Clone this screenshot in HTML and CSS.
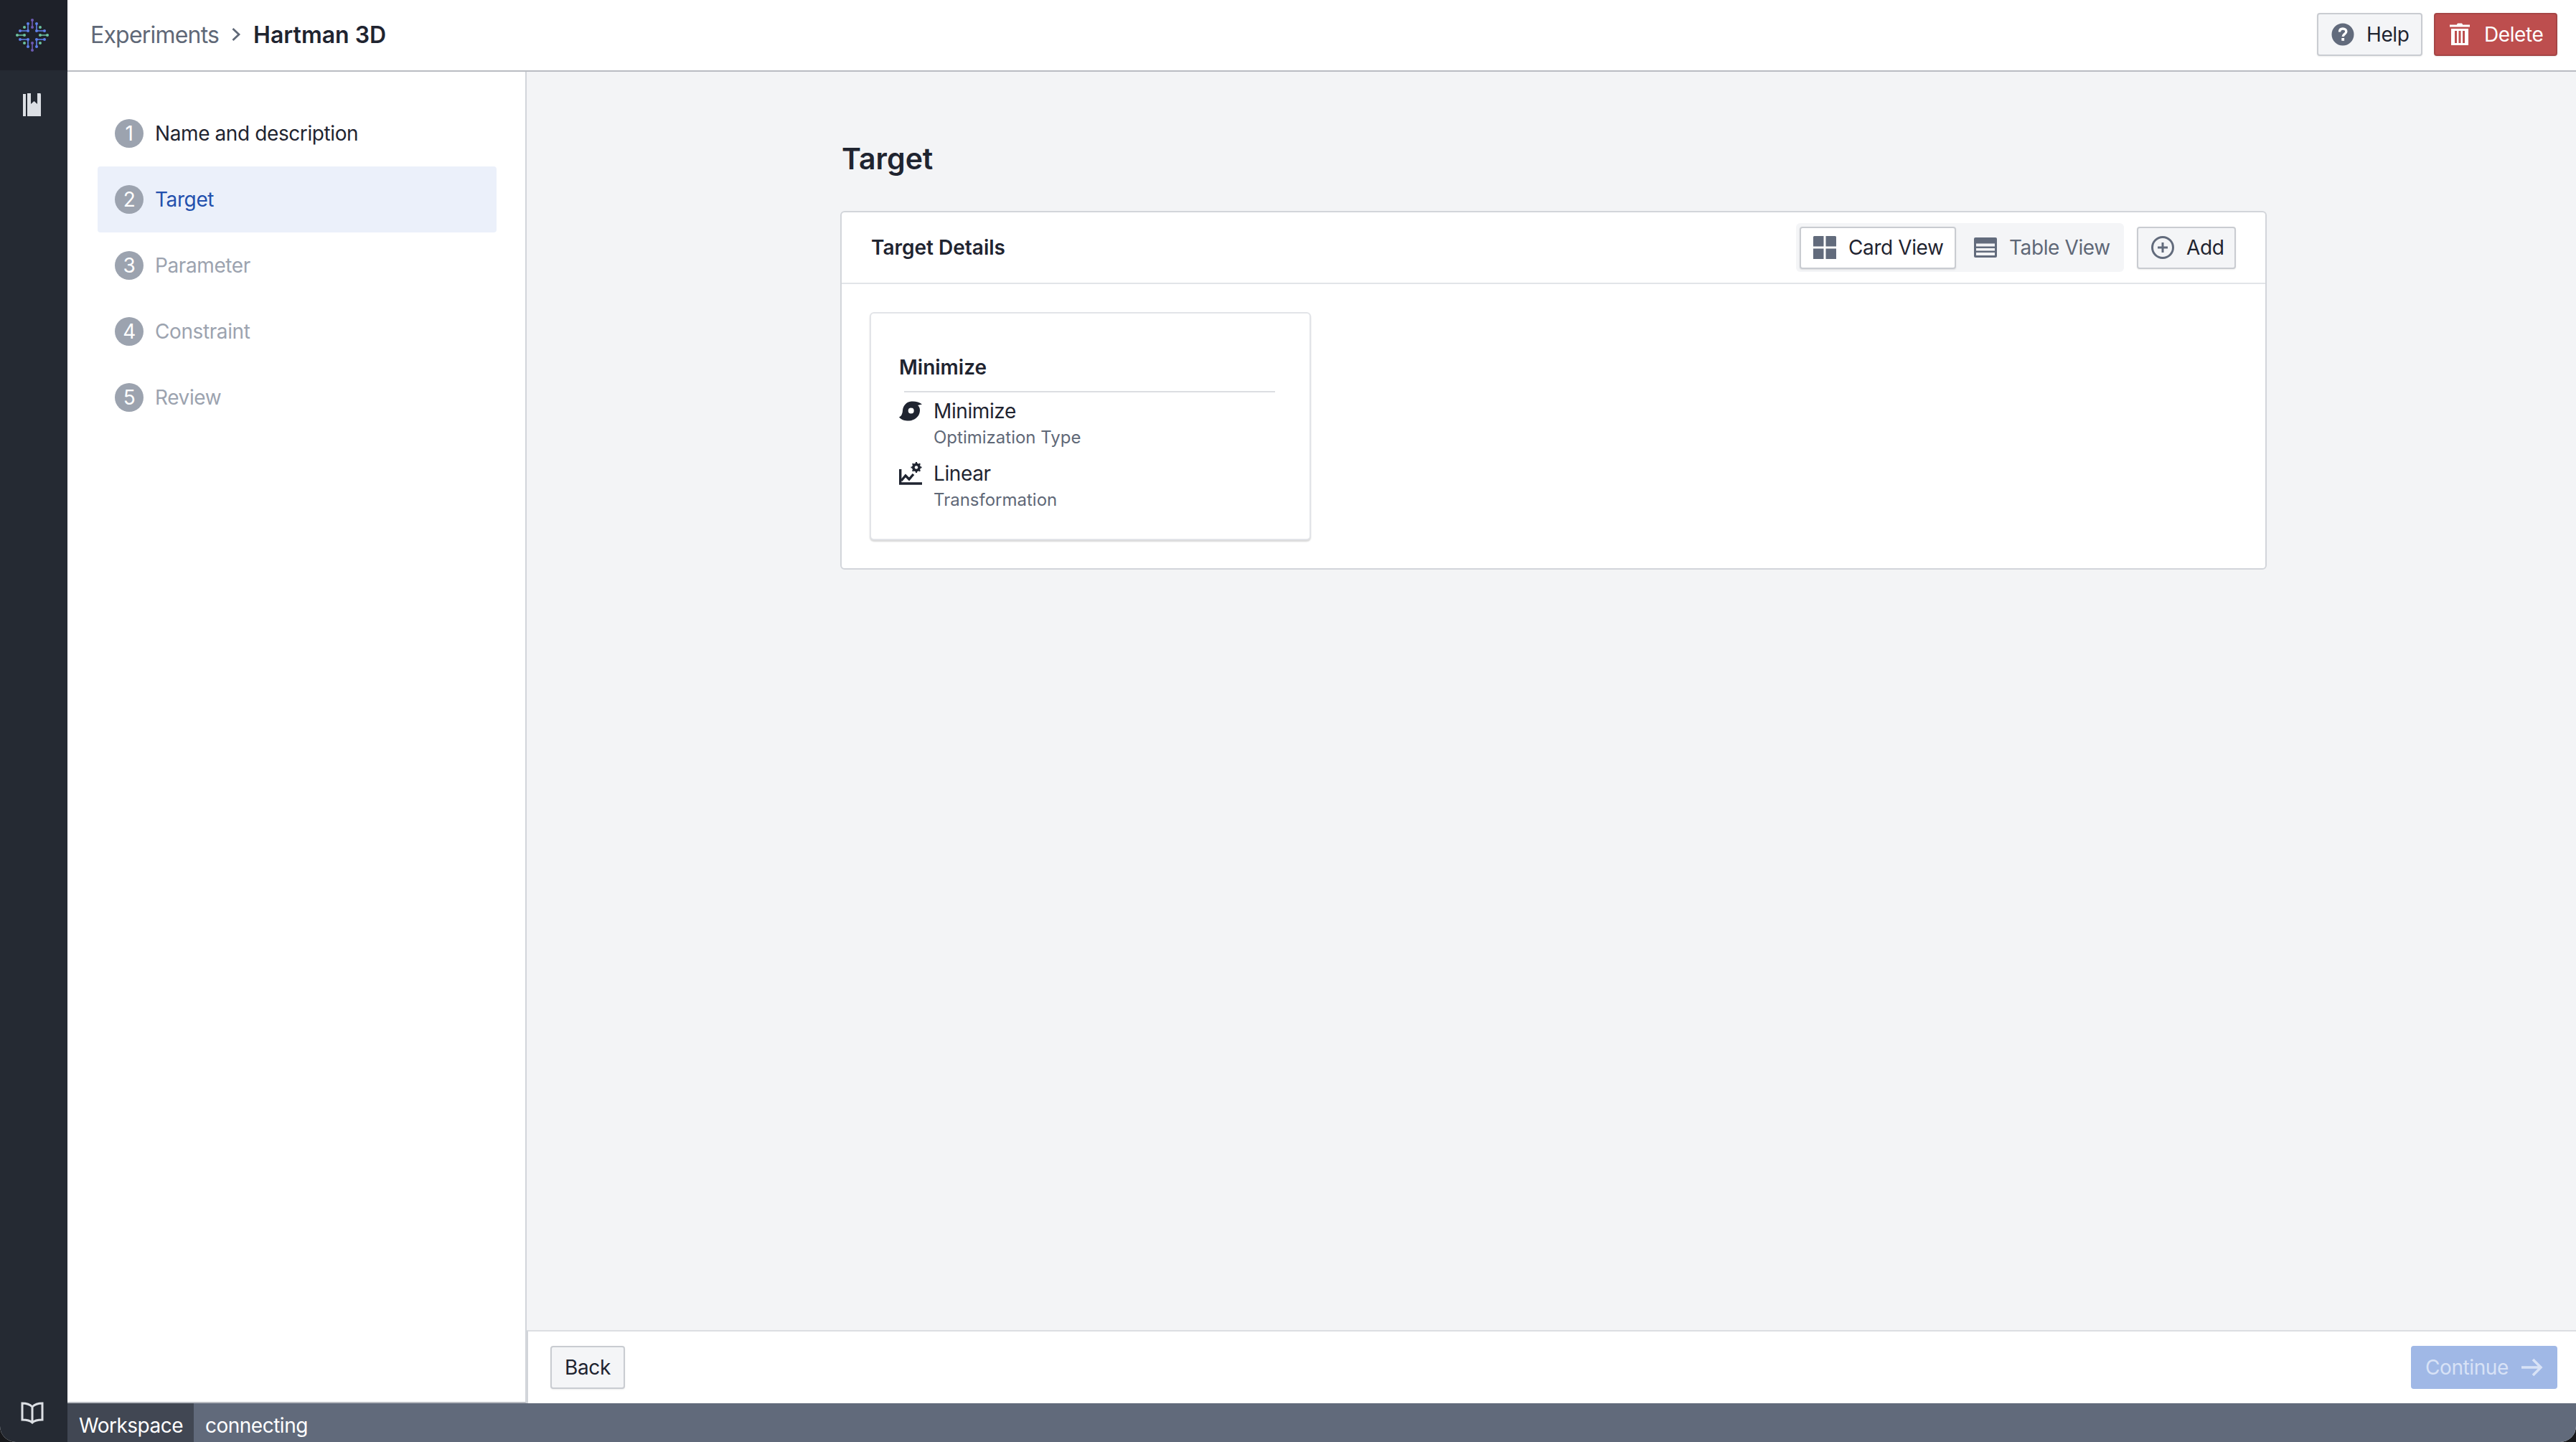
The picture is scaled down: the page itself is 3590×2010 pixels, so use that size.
FILE: index.html
```html
<!DOCTYPE html>
<html lang="en">
<head>
<meta charset="utf-8">
<title>Hartman 3D</title>
<link rel="stylesheet" href="styles.css">
</head>
<body>
<div class="app">
  <aside class="rail">
    <div class="rail-logo">
      <svg class="logo" viewBox="0 0 48 48" width="48" height="48">
        <g fill="none" stroke-width="1.6">
          <g stroke="#5f80ea">
            <path d="M18 8V18H6M30 8V18H42M18 40V30H6M30 40V30H42"/>
          </g>
          <g stroke="#6d5bb5"><path d="M24 2V14M24 34V46"/></g>
          <g stroke="#6cc2a0"><path d="M2 24H14M34 24H46"/></g>
        </g>
        <g fill="#5f80ea">
          <circle cx="18" cy="8" r="2"/><circle cx="18" cy="18" r="2"/><circle cx="7" cy="18" r="2"/>
          <circle cx="30" cy="8" r="2"/><circle cx="30" cy="18" r="2"/><circle cx="41" cy="18" r="2"/>
          <circle cx="18" cy="40" r="2"/><circle cx="18" cy="30" r="2"/><circle cx="7" cy="30" r="2"/>
          <circle cx="30" cy="40" r="2"/><circle cx="30" cy="30" r="2"/><circle cx="41" cy="30" r="2"/>
        </g>
        <g fill="#6d5bb5"><circle cx="24" cy="3" r="2"/><circle cx="24" cy="13" r="2"/><circle cx="24" cy="35" r="2"/><circle cx="24" cy="45" r="2"/></g>
        <g fill="#6cc2a0">
          <circle cx="3" cy="24" r="2"/><circle cx="13" cy="24" r="2"/><circle cx="35" cy="24" r="2"/><circle cx="45" cy="24" r="2"/>
          <circle cx="13" cy="13" r="2"/><circle cx="35" cy="13" r="2"/><circle cx="13" cy="35" r="2"/><circle cx="35" cy="35" r="2"/>
        </g>
      </svg>
    </div>
    <div class="rail-main">
      <svg class="rail-icon" viewBox="0 0 26 32" width="26" height="32" fill="#dcdfe4">
        <path d="M0 1H4V32H0Z"/>
        <path d="M6 0H11V15L15.500 11L20 15V0H24.500L25 2V32H6Z"/>
      </svg>
    </div>
    <svg class="rail-book" viewBox="0 0 32 32" width="32" height="32" fill="none" stroke="#dcdfe4" stroke-width="3">
      <path d="M16 8C13 5 8 3 2 3V26C8 26 13 27 16 30C19 27 24 26 30 26V3C24 3 19 5 16 8ZM16 8V30"/>
    </svg>
  </aside>

  <div class="workspace">
    <header class="topbar">
      <nav class="crumbs">
        <span class="crumb">Experiments</span>
        <svg class="crumb-sep" viewBox="0 0 14 20" width="14" height="20" fill="none" stroke="#5f6877" stroke-width="2.800"><path d="M2.500 2L11 10L2.500 18"/></svg>
        <span class="crumb-current">Hartman 3D</span>
      </nav>
      <div class="top-actions">
        <button class="btn btn-help">
          <svg class="btn-icon" viewBox="0 0 32 32" width="32" height="32"><circle cx="16" cy="16" r="15.500" fill="#626b7c"/><path d="M11.500 12.500C11.500 9.500 13.500 8 16 8C18.800 8 20.800 9.700 20.800 12C20.800 15.300 16.200 15.400 16.200 19" fill="none" stroke="#fff" stroke-width="3.400"/><rect x="14.300" y="21" width="3.800" height="3.800" fill="#fff"/></svg>
          Help
        </button>
        <button class="btn btn-danger">
          <svg class="btn-icon" viewBox="0 0 28 32" width="28" height="32" fill="#fff"><path d="M10 2.500C10 1 11 0.500 12 0.500H16C17 0.500 18 1 18 2.500H28V5.500H0V2.500Z"/><path d="M2 8H26V31H2ZM7 11V28H10V11ZM12.500 11V28H15.500V11ZM18 11V28H21V11Z" fill-rule="evenodd"/></svg>
          Delete
        </button>
      </div>
    </header>

    <div class="body-row">
      <nav class="steps">
        <div class="step step-done"><span class="step-num">1</span>Name and description</div>
        <div class="step step-active"><span class="step-num">2</span>Target</div>
        <div class="step"><span class="step-num">3</span>Parameter</div>
        <div class="step"><span class="step-num">4</span>Constraint</div>
        <div class="step"><span class="step-num">5</span>Review</div>
      </nav>

      <main class="main">
        <div class="content">
          <h1 class="page-title">Target</h1>
          <section class="panel">
            <div class="panel-head">
              <h2 class="panel-title">Target Details</h2>
              <div class="panel-tools">
                <div class="segment">
                  <button class="seg seg-on">
                    <svg class="btn-icon" viewBox="0 0 32 32" width="32" height="32" fill="#626b7c"><path d="M0 1.500Q0 0 1.500 0H14.500V14.500H0ZM17.500 0H30.500Q32 0 32 1.500V14.500H17.500ZM0 17.500H14.500V32H0ZM17.500 17.500H32V32H17.500Z"/></svg>
                    Card View
                  </button>
                  <button class="seg seg-off">
                    <svg class="btn-icon" viewBox="0 0 32 28" width="32" height="28"><rect width="32" height="28" rx="2" fill="#626b7c"/><path d="M3 8.500H29V12.500H3ZM3 15H29V18.500H3ZM3 21H29V25H3Z" fill="#f3f4f6"/></svg>
                    Table View
                  </button>
                </div>
                <button class="btn btn-add">
                  <svg class="btn-icon" viewBox="0 0 32 32" width="32" height="32" fill="none" stroke="#626b7c" stroke-width="3"><circle cx="16" cy="16" r="14.500"/><path d="M16 9V23M9 16H23"/></svg>
                  Add
                </button>
              </div>
            </div>
            <div class="panel-body">
              <article class="card">
                <h3 class="card-title">Minimize</h3>
                <div class="card-rule"></div>
                <div class="fact">
                  <svg class="fact-icon" viewBox="0 0 32 32" width="32" height="32" fill="#1f2430">
                    <path fill-rule="evenodd" d="M32 6.500C28 3 22 2 17 2.500C10 3 5.500 9 5 15C4.800 19 3.500 23 0 24.500C3 28.500 9 29.700 14 29.500C22 29.200 29 23 29 15C29 12 28 9.500 26 8C28 7.300 30 7 32 6.500ZM16.700 11.500A4 4 0 1 1 16.690 19.500A4 4 0 0 1 16.700 11.500Z"/>
                  </svg>
                  <div class="fact-text"><div class="fact-value">Minimize</div><div class="fact-label">Optimization Type</div></div>
                </div>
                <div class="fact">
                  <svg class="fact-icon" viewBox="0 0 32 32" width="32" height="32" fill="none" stroke="#1f2430">
                    <path d="M1.700 10V30H32" stroke-width="3.400"/>
                    <path d="M3 26L9 19L14 24L20 17" stroke-width="3.400"/>
                    <circle cx="24" cy="7.500" r="4.400" stroke-width="3.200"/>
                    <path d="M24 0V15M16.500 7.500H31.500M18.700 2.200L29.300 12.800M29.300 2.200L18.700 12.800" stroke-width="2.200"/>
                    <circle cx="24" cy="7.500" r="2.200" fill="#fff" stroke="none"/>
                  </svg>
                  <div class="fact-text"><div class="fact-value">Linear</div><div class="fact-label">Transformation</div></div>
                </div>
              </article>
            </div>
          </section>
        </div>
        <footer class="wizard-foot">
          <button class="btn btn-back">Back</button>
          <button class="btn btn-continue">Continue
            <svg class="continue-arrow" viewBox="0 0 30 26" width="30" height="26" fill="none" stroke="#d8e2f6" stroke-width="3.600"><path d="M0 13H27M16 2L27 13L16 24"/></svg>
          </button>
        </footer>
      </main>
    </div>

    <footer class="status">
      <span class="status-name">Workspace</span>
      <span class="status-state">connecting</span>
    </footer>
  </div>
</div>
</body>
</html>
```

FILE: styles.css
```css
* { box-sizing: border-box; }
html, body { margin: 0; height: 100%; }
body {
  font-family: Inter, "Liberation Sans", sans-serif;
  font-size: 28px;
  letter-spacing: -0.4px;
  color: #1f2430;
  background: #17181b;
  overflow: hidden;
}
button { font: inherit; color: inherit; letter-spacing: inherit; }
h1, h2, h3 { margin: 0; }

.app {
  display: flex;
  height: 2010px;
  width: 3590px;
  background: #fff;
  border-radius: 0 0 22px 22px;
  overflow: hidden;
}

.rail {
  width: 94px;
  flex: none;
  background: #252a33;
  display: flex;
  flex-direction: column;
  align-items: center;
}
.rail-logo {
  width: 100%;
  height: 98px;
  background: #1e2129;
  display: flex;
  align-items: center;
  justify-content: center;
  padding: 0 4px 0 0;
}
.rail-main { flex: 1; padding-top: 32px; margin-right: 4px; }
.rail-icon { display: block; }
.rail-book { margin: 0 4px 25px 0; }

.workspace { flex: 1; min-width: 0; display: flex; flex-direction: column; }

.topbar {
  height: 100px;
  flex: none;
  background: #fff;
  border-bottom: 2px solid #b9bcc2;
  display: flex;
  align-items: center;
  justify-content: space-between;
  padding: 0 26px 2px 32px;
}
.crumbs { display: flex; align-items: center; font-size: 32px; }
.crumb { color: #5f6877; letter-spacing: -0.8px; }
.crumb-sep { margin: 0 17px 0 17px; }
.crumb-current { font-weight: 600; letter-spacing: 0; }
.top-actions { display: flex; gap: 16px; }

.btn {
  height: 60px;
  display: inline-flex;
  align-items: center;
  border-radius: 4px;
  border: 2px solid #c9ccd1;
  background: #f4f5f7;
  box-shadow: 0 1px 2px rgba(0,0,0,.08);
  padding: 0 18px;
  white-space: nowrap;
}
.btn-icon { flex: none; }
.btn-help { width: 147px; padding-left: 18px; gap: 17px; }
.btn-danger {
  width: 172px;
  background: #bd4e4e;
  border-color: #a54545;
  color: #fff;
  padding-left: 20px;
  gap: 20px;
}

.body-row { flex: 1; min-height: 0; display: flex; }

.steps {
  width: 640px;
  flex: none;
  background: #fff;
  border-right: 2px solid #d2d5da;
  border-bottom: 2px solid #b9bcc2;
  padding: 40px 40px 0 42px;
}
.step {
  height: 92px;
  display: flex;
  align-items: center;
  padding-left: 24px;
  gap: 16px;
  border-radius: 4px;
  color: #9ca3af;
}
.step-done { color: #1f2430; }
.step-active { background: #ebf0fa; color: #2350ad; }
.step-num {
  width: 40px;
  height: 40px;
  flex: none;
  border-radius: 50%;
  background: #9ca3af;
  color: #fff;
  display: flex;
  align-items: center;
  justify-content: center;
  font-size: 28px;
}

.main {
  flex: 1;
  min-width: 0;
  background: #f3f4f6;
  display: flex;
  flex-direction: column;
}
.content { flex: 1; min-height: 0; padding: 91px 0 0 437px; }
.page-title { font-size: 41px; font-weight: 600; line-height: 60px; margin-left: 2px; letter-spacing: 0; }

.panel {
  width: 1988px;
  height: 500px;
  margin-top: 43px;
  background: #fff;
  border: 2px solid #d2d5da;
  border-radius: 6px;
}
.panel-head {
  height: 100px;
  border-bottom: 2px solid #e2e4e8;
  display: flex;
  align-items: center;
  justify-content: space-between;
  padding: 0 41px;
}
.panel-title { font-size: 28px; font-weight: 600; letter-spacing: 0; }
.panel-tools { display: flex; align-items: center; gap: 18px; }
.segment {
  display: flex;
  width: 457px;
  flex: none;
  height: 68px;
  align-items: center;
  background: #f4f5f7;
  border-radius: 6px;
  padding: 0 0 0 5px;
}
.seg {
  height: 59px;
  display: flex;
  align-items: center;
  gap: 17px;
  border: 0;
  background: none;
  padding: 0;
  white-space: nowrap;
}
.seg-on {
  width: 218px;
  padding-left: 17px;
  background: #fff;
  border: 2px solid #c9ccd1;
  border-radius: 4px;
  box-shadow: 0 1px 2px rgba(0,0,0,.1);
}
.seg-off { color: #5f6877; padding-left: 25px; }
.btn-add { width: 138px; padding-left: 18px; height: 59px; gap: 17px; }

.panel-body { padding: 39px 39px 0; }
.card {
  width: 615px;
  height: 318px;
  background: #fff;
  border: 2px solid #e2e4e8;
  border-radius: 6px;
  box-shadow: 0 2px 2px rgba(0,0,0,.16);
  padding: 56px 40px 0 39px;
}
.card-title { font-size: 28px; font-weight: 600; line-height: 38px; letter-spacing: 0; }
.card-rule { height: 2px; background: #dcdee2; margin: 14px 8px 0 7px; }
.fact { display: flex; gap: 16px; margin-bottom: 13px; }
.card-rule + .fact { margin-top: 6px; }
.fact-icon { flex: none; margin-top: 4px; }
.fact-value { line-height: 40px; }
.fact-label { font-size: 24px; line-height: 34px; color: #5f6877; letter-spacing: 0; }

.wizard-foot {
  height: 102px;
  flex: none;
  background: #fff;
  border-top: 2px solid #dcdee2;
  border-left: 2px solid #d2d5da;
  display: flex;
  align-items: center;
  justify-content: space-between;
  padding: 0 26px 0 31px;
}
.btn-back { width: 104px; justify-content: center; padding: 0; }
.btn-continue {
  width: 204px;
  background: #a0b8e6;
  border-color: #a0b8e6;
  color: #d8e2f6;
  box-shadow: none;
  padding-left: 18px;
  gap: 18px;
}
.continue-arrow { flex: none; }

.status {
  height: 54px;
  flex: none;
  background: #616a7b;
  color: #fff;
  display: flex;
  align-items: center;
  letter-spacing: -0.5px;
}
.status-name {
  width: 176px;
  height: 100%;
  background: #414753;
  padding-left: 16px;
  line-height: 62px;
}
.status-state { padding-left: 16px; line-height: 62px; height: 100%; }
```
